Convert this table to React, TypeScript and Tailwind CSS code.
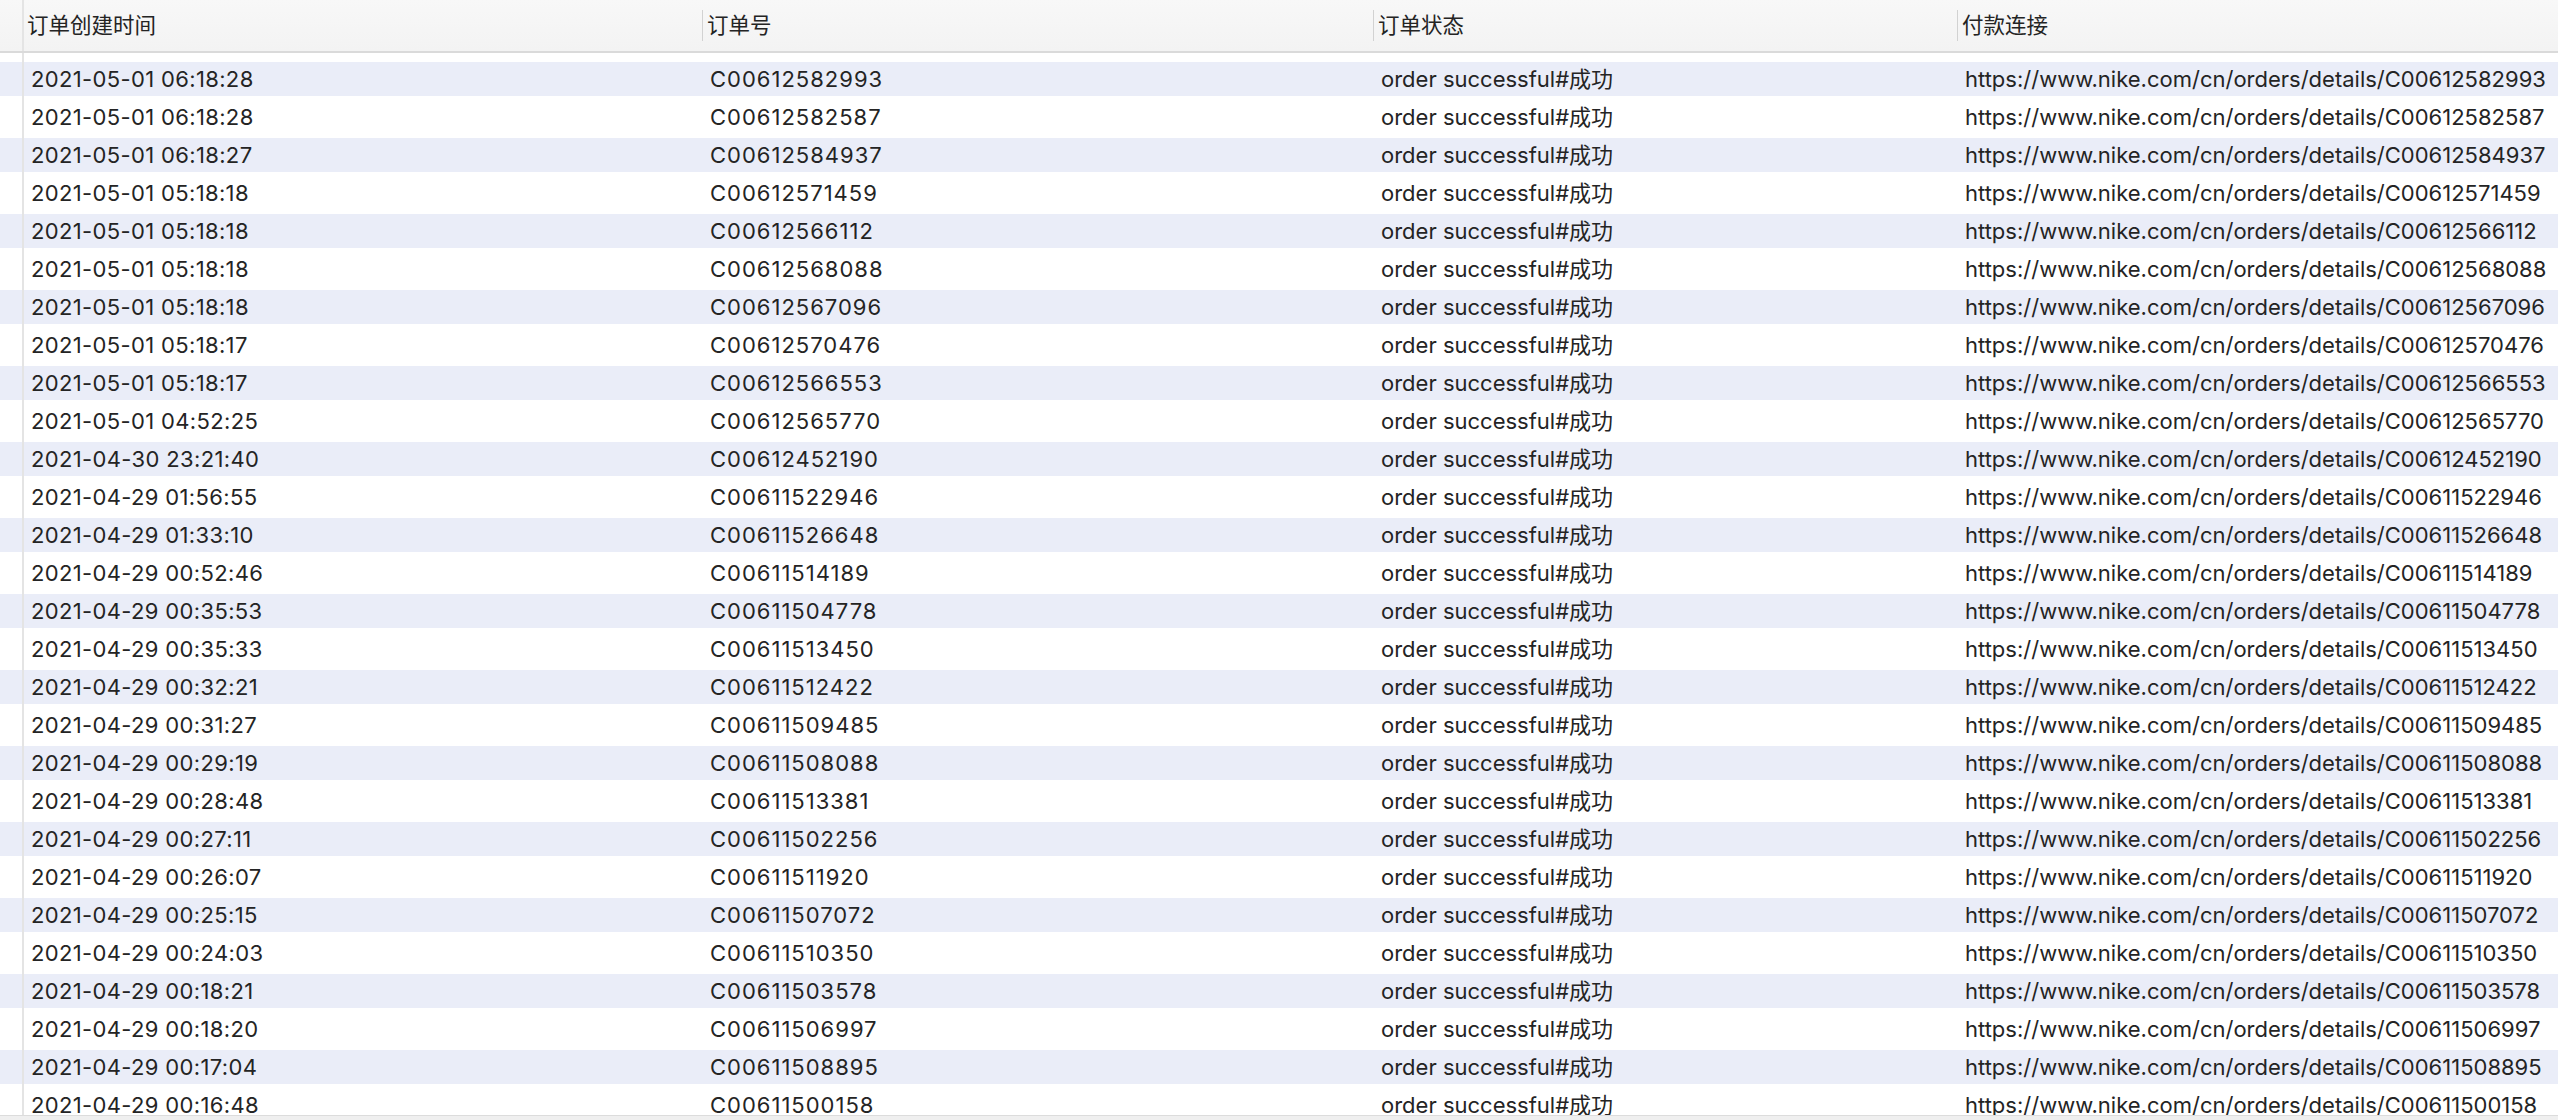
const rows: [string, string][] = [
  ['2021-05-01 06:18:28', 'C00612582993'],
  ['2021-05-01 06:18:28', 'C00612582587'],
  ['2021-05-01 06:18:27', 'C00612584937'],
  ['2021-05-01 05:18:18', 'C00612571459'],
  ['2021-05-01 05:18:18', 'C00612566112'],
  ['2021-05-01 05:18:18', 'C00612568088'],
  ['2021-05-01 05:18:18', 'C00612567096'],
  ['2021-05-01 05:18:17', 'C00612570476'],
  ['2021-05-01 05:18:17', 'C00612566553'],
  ['2021-05-01 04:52:25', 'C00612565770'],
  ['2021-04-30 23:21:40', 'C00612452190'],
  ['2021-04-29 01:56:55', 'C00611522946'],
  ['2021-04-29 01:33:10', 'C00611526648'],
  ['2021-04-29 00:52:46', 'C00611514189'],
  ['2021-04-29 00:35:53', 'C00611504778'],
  ['2021-04-29 00:35:33', 'C00611513450'],
  ['2021-04-29 00:32:21', 'C00611512422'],
  ['2021-04-29 00:31:27', 'C00611509485'],
  ['2021-04-29 00:29:19', 'C00611508088'],
  ['2021-04-29 00:28:48', 'C00611513381'],
  ['2021-04-29 00:27:11', 'C00611502256'],
  ['2021-04-29 00:26:07', 'C00611511920'],
  ['2021-04-29 00:25:15', 'C00611507072'],
  ['2021-04-29 00:24:03', 'C00611510350'],
  ['2021-04-29 00:18:21', 'C00611503578'],
  ['2021-04-29 00:18:20', 'C00611506997'],
  ['2021-04-29 00:17:04', 'C00611508895'],
  ['2021-04-29 00:16:48', 'C00611500158'],
];

const headers = ['订单创建时间', '订单号', '订单状态', '付款连接'];

const gridCols = 'grid grid-cols-[24px_678px_671px_584px_1fr]';

export default function App() {
  return (
    <div
      className="h-[1120px] w-full overflow-hidden bg-white flex flex-col text-[#242424]"
      style={{ fontFamily: "Inter, 'Noto Sans CJK SC', sans-serif" }}
    >
      {/* Header */}
      <div className={`${gridCols} h-[53px] shrink-0 border-b-2 border-[#dadada] bg-gradient-to-b from-[#f8f8f8] to-[#f3f3f3]`}>
        <div className="border-r-2 border-[#e4e4e4]" />
        {headers.map((h, i) => (
          <div key={h} className="flex items-center">
            {i > 0 && <div className="w-px h-[31px] bg-[#d2d2d2]" />}
            <span className={i === 0 ? 'pl-[3px] text-[21.5px]' : 'pl-[4px] text-[21.5px]'}>{h}</span>
          </div>
        ))}
      </div>

      {/* Body */}
      <div className="flex-1 overflow-hidden">
        <div className={`${gridCols} h-[9px]`}>
          <div className="border-r-2 border-[#e4e4e4]" />
        </div>
        {rows.map(([time, id], i) => (
          <div
            key={id}
            className={`${gridCols} items-center text-[22px] ${i % 2 === 0 ? 'h-[34px] bg-[#eaedf8]' : 'h-[42px] bg-white'}`}
          >
            <div className="h-full border-r-2 border-[#e4e4e4]" />
            <div className="pl-[7px] whitespace-nowrap tracking-[0.35px]">{time}</div>
            <div className="pl-[8px] whitespace-nowrap tracking-[1px]">{id}</div>
            <div className="pl-[8px] whitespace-nowrap">order successful#成功</div>
            <div className="pl-[8px] whitespace-nowrap">https://www.nike.com/cn/orders/details/{id}</div>
          </div>
        ))}
      </div>

      {/* Horizontal scroll track */}
      <div className="h-[5px] shrink-0 border-t border-[#dcdcdc] bg-[#efefef]" />
    </div>
  );
}
